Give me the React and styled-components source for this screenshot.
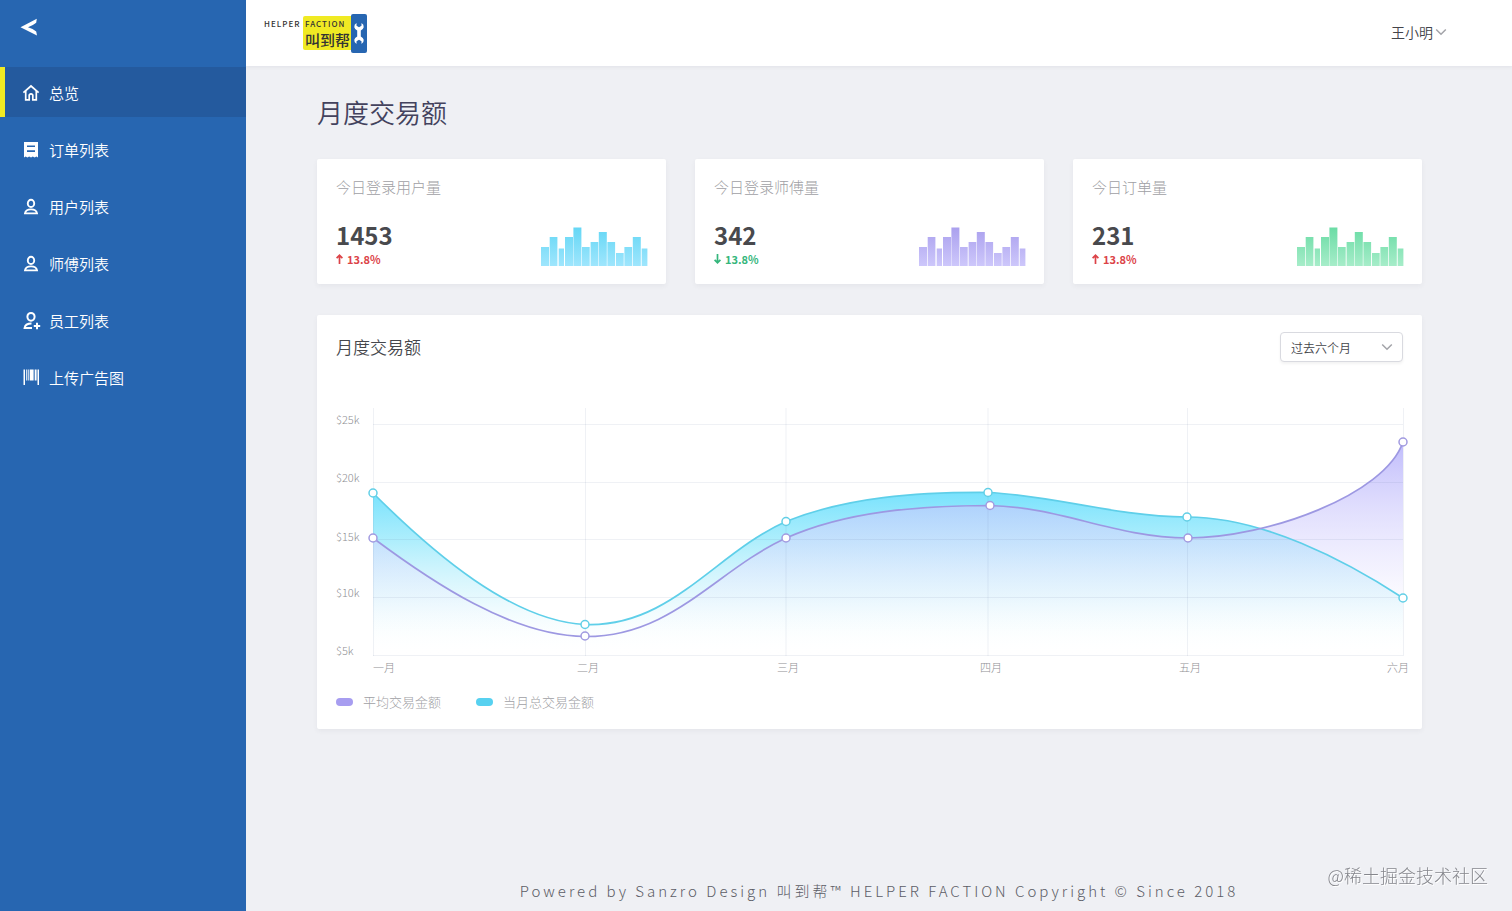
import React from 'react';
import styled, { createGlobalStyle } from 'styled-components';

const GlobalStyle = createGlobalStyle`
  *, *::before, *::after { box-sizing: border-box; }
  body {
    margin: 0;
    background: #eff0f4;
    color: #43425d;
    font-family: "Noto Sans CJK SC", "Noto Sans", sans-serif;
    font-weight: 300;
  }
  h1, h2, h3, p, ul, dl { margin: 0; padding: 0; }
  button, select { font: inherit; color: inherit; }
`;

const Page = styled.div`
  display: grid;
  grid-template-columns: 246px minmax(0, 1fr);
  min-height: 100vh;
`;

const Sidebar = styled.aside`
  background: #2766b1;
  color: #fff;
`;

const BackButton = styled.button`
  display: flex;
  align-items: center;
  width: 100%;
  height: 67px;
  padding: 0 20px 14px;
  border: 0;
  background: none;
  cursor: pointer;
`;

const NavList = styled.ul`
  display: grid;
  gap: 7px;
  list-style: none;
`;

const NavLink = styled.a`
  display: flex;
  align-items: center;
  gap: 8px;
  height: 50px;
  padding: 2px 0 0 18px;
  border-left: 5px solid ${(p) => (p.$active ? '#f0ea23' : 'transparent')};
  background: ${(p) => (p.$active ? '#245a9e' : 'transparent')};
  background-clip: padding-box;
  color: #fff;
  font-size: 15px;
  font-weight: 350;
  line-height: 22px;
  text-decoration: none;
  svg { flex: none; }
`;

const Main = styled.div`
  display: flex;
  flex-direction: column;
  min-width: 0;
`;

const TopBar = styled.header`
  display: flex;
  align-items: center;
  justify-content: space-between;
  height: 66px;
  padding: 0 65px 0 18px;
  background: #fff;
  box-shadow: 0 1px 4px rgba(60, 70, 90, 0.08);
`;

const Logo = styled.a`
  display: flex;
  align-items: center;
  color: #333;
  text-decoration: none;
  font-size: 8px;
  font-weight: 500;
  line-height: 10px;
  letter-spacing: 1px;
`;

const LogoLead = styled.span`
  height: 34px;
  padding-top: 3px;
  width: 39px;
`;

const LogoPlate = styled.span`
  display: flex;
  flex-direction: column;
  width: 48px;
  height: 34px;
  padding: 3px 2px 0;
  border-radius: 2px 0 0 2px;
  background: #f0ea23;
`;

const LogoName = styled.span`
  font-size: 15px;
  font-weight: 500;
  line-height: 22px;
  letter-spacing: 0;
  white-space: nowrap;
`;

const LogoTool = styled.span`
  display: grid;
  place-items: center;
  width: 16px;
  height: 39px;
  border-radius: 2px;
  background: #2766b1;
`;

const UserMenu = styled.button`
  display: flex;
  align-items: center;
  gap: 2px;
  padding: 0 0 2px;
  border: 0;
  background: none;
  color: #43444a;
  font-size: 14px;
  font-weight: 350;
  line-height: 20px;
  cursor: pointer;
`;

const Content = styled.main`
  flex: 1;
  padding: 26px 90px 0 71px;
`;

const Title = styled.h1`
  margin-bottom: 27px;
  font-size: 26px;
  font-weight: 350;
  line-height: 40px;
`;

const StatGrid = styled.section`
  display: grid;
  grid-template-columns: repeat(3, minmax(0, 1fr));
  gap: 29px;
  margin-bottom: 31px;
`;

const Card = styled.article`
  border-radius: 2px;
  background: #fff;
  box-shadow: 0 2px 5px rgba(60, 70, 90, 0.06);
`;

const StatCard = styled(Card)`
  padding: 17px 18px 17px 19px;
`;

const StatLabel = styled.h3`
  margin-bottom: 22px;
  color: #a0a0a4;
  font-size: 15px;
  font-weight: 300;
  line-height: 22px;
`;

const StatBody = styled.div`
  display: flex;
  align-items: flex-end;
  justify-content: space-between;
`;

const StatValue = styled.p`
  color: #48494d;
  font-size: 24px;
  font-weight: 700;
  line-height: 30px;
`;

const StatChange = styled.p`
  display: flex;
  align-items: center;
  gap: 4px;
  height: 17px;
  color: ${(p) => (p.$up ? '#dc4348' : '#35b67c')};
  font-size: 11px;
  font-weight: 700;
`;

const ChartCard = styled(Card)`
  padding-bottom: 17px;
`;

const ChartHeader = styled.div`
  display: flex;
  align-items: center;
  justify-content: space-between;
  padding: 17px 19px 28px;
`;

const ChartTitle = styled.h2`
  color: #46474c;
  font-size: 17px;
  font-weight: 350;
  line-height: 30px;
`;

const SelectBox = styled.label`
  display: grid;
  align-items: center;
  width: 123px;
  height: 30px;
  > * { grid-area: 1 / 1; }
  > svg { justify-self: end; margin-right: 10px; pointer-events: none; }
`;

const RangeSelect = styled.select`
  width: 100%;
  height: 100%;
  padding: 0 10px;
  border: 1px solid #d9dae0;
  border-radius: 4px;
  background: #fff;
  box-shadow: 0 2px 3px rgba(0, 0, 0, 0.05);
  color: #43444a;
  font-size: 12px;
  font-weight: 350;
  appearance: none;
`;

const Plot = styled.svg`
  display: block;
  width: 100%;
  height: auto;
  text {
    fill: #8f8f94;
    font-size: 11px;
    font-weight: 300;
  }
`;

const Legend = styled.ul`
  display: flex;
  gap: 35px;
  padding: 0 19px;
  margin-top: 16px;
  list-style: none;
`;

const LegendItem = styled.li`
  display: flex;
  align-items: center;
  gap: 10px;
  color: #a0a0a4;
  font-size: 13px;
  line-height: 20px;
  &::before {
    content: "";
    width: 17px;
    height: 8px;
    border-radius: 4px;
    background: ${(p) => p.$color};
  }
`;

const Footer = styled.footer`
  padding: 0 0 8px;
  color: #5c5d66;
  font-size: 15px;
  line-height: 24px;
  letter-spacing: 3px;
  text-align: center;
`;

const Watermark = styled.span`
  position: fixed;
  right: 24px;
  bottom: 24px;
  color: #85868c;
  font-size: 18px;
  line-height: 24px;
  text-shadow: 1px 1px 0 #fff;
`;

const icons = {
  home: (
    <g fill="none" stroke="#fff" strokeWidth="1.7">
      <path d="M.4 8.600 8 2 15.600 8.600" />
      <path d="M2.700 7.100V15.800H6.200V11.100Q8 8.800 9.800 11.100V15.800H13.300V7.100" />
    </g>
  ),
  order: (
    <path fill="#fff" fillRule="evenodd" d="M1 1H15V16.500L13.400 15.500 11.600 16.500 9.800 15.500 8 16.500 6.200 15.500 4.400 16.500 2.600 15.500 1 16.500ZM4 4.500V6.100H12V4.500ZM4 9.300V10.900H12V9.300Z" />
  ),
  user: (
    <g fill="none" stroke="#fff" strokeWidth="1.9">
      <ellipse cx="8" cy="5.400" rx="3.200" ry="3.600" />
      <path d="M2 15.400C2.400 12.600 4.500 11.400 8 11.400S13.600 12.600 14 15.400Z" />
    </g>
  ),
  staff: (
    <g fill="none" stroke="#fff" strokeWidth="2">
      <ellipse cx="8" cy="4.800" rx="3.600" ry="3.900" />
      <path d="M9 16H1.600C2 12.800 4 11.500 8.500 11.500" />
      <path d="M14 10.800V17.200M10.800 14H17.200" />
    </g>
  ),
  banner: (
    <g fill="#fff">
      <path d="M.5.5H2V16H.5ZM3.200.5H4.300V11.500H3.200ZM5.300.5H6.300V11.500H5.300ZM7 .5H10.600V11.500H7ZM11.700.5H13.600V11.500H11.700ZM14.500.5H16V16H14.500Z" />
    </g>
  ),
};

const NavIcon = ({ name }) => (
  <svg width="18" height="18" viewBox="0 0 18 18" overflow="visible" aria-hidden="true">
    {icons[name]}
  </svg>
);

const Chevron = () => (
  <svg width="12" height="8" viewBox="0 0 12 8" fill="none" stroke="#a3a4a9" strokeWidth="1.5" aria-hidden="true">
    <path d="M1.200 1.500 6 6.300 10.800 1.500" />
  </svg>
);

const Arrow = ({ up }) => (
  <svg width="7" height="10" viewBox="0 0 7 10" fill="none" stroke="currentColor" strokeWidth="1.700" aria-hidden="true">
    {up ? <path d="M3.500 10V1.500M.6 4.200 3.500 1.300 6.400 4.200" /> : <path d="M3.500 0V8.500M.6 5.800 3.500 8.700 6.400 5.800" />}
  </svg>
);

const navItems = [
  ['home', '总览'],
  ['order', '订单列表'],
  ['user', '用户列表'],
  ['user', '师傅列表'],
  ['staff', '员工列表'],
  ['banner', '上传广告图'],
];

const stats = [
  { id: 'users', label: '今日登录用户量', value: '1453', up: true, from: '#64d7f5', to: '#a0e6fd' },
  { id: 'masters', label: '今日登录师傅量', value: '342', up: false, from: '#aaa0ee', to: '#cec8fb' },
  { id: 'orders', label: '今日订单量', value: '231', up: true, from: '#6adca5', to: '#a8edca' },
];

// [x, width, height] of each bar
const bars = [
  [0, 8, 19], [8.7, 7.7, 29], [17.7, 5.3, 17.5], [24, 8, 29], [32.4, 8, 38.5],
  [41, 7.7, 19], [49.6, 7.7, 24], [57.8, 8, 34], [66.4, 7.7, 24],
  [75, 7.7, 13], [83.4, 7.7, 19], [91.8, 8, 29], [100.7, 5.700, 17.500],
];

const Bars = ({ id, from, to }) => (
  <svg width="107" height="40" viewBox="0 0 107 40" aria-hidden="true">
    <defs>
      <linearGradient id={id} x1="0" y1="0" x2="0" y2="40" gradientUnits="userSpaceOnUse">
        <stop offset="0" stopColor={from} />
        <stop offset="1" stopColor={to} />
      </linearGradient>
    </defs>
    {bars.map(([x, w, h]) => (
      <rect key={x} x={x} y={39 - h} width={w} height={h} fill={`url(#${id})`} />
    ))}
  </svg>
);

const totalLine =
  'M56 103C116 163 195 231 268 234.500C353 238 398 163 469 131.500C530 107 600 102 671 102.500C735 105 795 126 870 127C945 127 1028 170 1086 208';
const averageLine =
  'M56 148C115 192 195 246 268 246.500C355 247 398 181 469 148C530 121 600 116 672 115.500C745 117 795 147 871 148C950 148 1068 105 1086 52';

const totalPoints = [[56, 103], [268, 234.5], [469, 131.5], [671, 102.5], [870, 127], [1086, 208]];
const averagePoints = [[56, 148], [268, 246], [469, 148], [673, 115.5], [871, 148], [1086, 52]];

const yTicks = [['$25k', 34], ['$20k', 92], ['$15k', 150.5], ['$10k', 207], ['$5k', 264.5]];
const xTicks = [['一月', 67], ['二月', 271], ['三月', 471], ['四月', 674], ['五月', 873], ['六月', 1081]];

const Points = ({ points, color }) =>
  points.map(([x, y]) => (
    <circle key={x} cx={x} cy={y} r="4" fill="#fff" stroke={color} strokeWidth="1.500" />
  ));

const TrendChart = () => (
  <Plot viewBox="0 0 1105 286" role="img" aria-label="月度交易额">
    <defs>
      <linearGradient id="totalFill" x1="0" y1="102" x2="0" y2="265" gradientUnits="userSpaceOnUse">
        <stop offset="0" stopColor="#78e2fd" />
        <stop offset="0.3" stopColor="#a5ecfc" stopOpacity="0.900" />
        <stop offset="0.65" stopColor="#cdf3fc" stopOpacity="0.500" />
        <stop offset="1" stopColor="#fff" stopOpacity="0" />
      </linearGradient>
      <linearGradient id="averageFill" x1="0" y1="52" x2="0" y2="250" gradientUnits="userSpaceOnUse">
        <stop offset="0" stopColor="#b0abfb" stopOpacity="0.800" />
        <stop offset="0.32" stopColor="#cac6fc" stopOpacity="0.600" />
        <stop offset="0.65" stopColor="#e6e3fe" stopOpacity="0.450" />
        <stop offset="1" stopColor="#fff" stopOpacity="0" />
      </linearGradient>
    </defs>
    <path d={`${totalLine}V265H56Z`} fill="url(#totalFill)" />
    <path d={`${averageLine}V265H56Z`} fill="url(#averageFill)" />
    <path
      d="M56 34.500H1086M56 92.500H1086M56 149.500H1086M56 207.500H1086M56 265.500H1086M56.500 18V266M268.500 18V266M469 18V266M671 18V266M870.500 18V266M1086.500 18V266"
      fill="none"
      stroke="#50648c"
      strokeOpacity="0.09"
    />
    <path d={totalLine} fill="none" stroke="#5fcfe9" strokeWidth="1.700" />
    <path d={averageLine} fill="none" stroke="#9d98e2" strokeWidth="1.700" />
    <Points points={totalPoints} color="#62cfe6" />
    <Points points={averagePoints} color="#a19ae0" />
    {yTicks.map(([label, y]) => (
      <text key={label} x="19" y={y}>{label}</text>
    ))}
    {xTicks.map(([label, x]) => (
      <text key={label} x={x} y="282" textAnchor="middle">{label}</text>
    ))}
  </Plot>
);

export default function App() {
  return (
    <>
      <GlobalStyle />
      <Page>
        <Sidebar>
          <BackButton aria-label="收起菜单">
            <svg width="18" height="18" viewBox="0 0 18 18" fill="#fff" aria-hidden="true">
              <path d="M.5 9.300 16.800.8 16.200 4.800Q13 7.500 8 9.300 13 10.800 16.200 13.500L17 17.500Z" />
            </svg>
          </BackButton>
          <nav>
            <NavList>
              {navItems.map(([icon, label], i) => (
                <li key={label}>
                  <NavLink href="#" $active={i === 0} aria-current={i === 0 ? 'page' : undefined}>
                    <NavIcon name={icon} />
                    {label}
                  </NavLink>
                </li>
              ))}
            </NavList>
          </nav>
        </Sidebar>
        <Main>
          <TopBar>
            <Logo href="#">
              <LogoLead>HELPER</LogoLead>
              <LogoPlate>
                FACTION
                <LogoName>叫到帮</LogoName>
              </LogoPlate>
              <LogoTool>
                <svg width="10" height="21" viewBox="0 0 10 21" fill="#fff" aria-hidden="true">
                  <path d="M2.500 0V2.800L5 4.300 7.500 2.800V0Q10 1.500 9.700 4.300 9.300 6.300 6.800 7.500V13.500Q9.300 14.700 9.700 16.700 10 19.500 7.500 21V18.200L5 16.700 2.500 18.200V21Q0 19.500.3 16.700.7 14.700 3.200 13.500V7.500Q.7 6.300.3 4.300 0 1.500 2.500 0Z" />
                </svg>
              </LogoTool>
            </Logo>
            <UserMenu>
              王小明
              <Chevron />
            </UserMenu>
          </TopBar>
          <Content>
            <Title>月度交易额</Title>
            <StatGrid>
              {stats.map((s) => (
                <StatCard key={s.id}>
                  <StatLabel>{s.label}</StatLabel>
                  <StatBody>
                    <div>
                      <StatValue>{s.value}</StatValue>
                      <StatChange $up={s.up}>
                        <Arrow up={s.up} />
                        13.8%
                      </StatChange>
                    </div>
                    <Bars id={s.id} from={s.from} to={s.to} />
                  </StatBody>
                </StatCard>
              ))}
            </StatGrid>
            <ChartCard>
              <ChartHeader>
                <ChartTitle>月度交易额</ChartTitle>
                <SelectBox>
                  <RangeSelect aria-label="时间范围">
                    <option>过去六个月</option>
                  </RangeSelect>
                  <Chevron />
                </SelectBox>
              </ChartHeader>
              <TrendChart />
              <Legend>
                <LegendItem $color="#a79df0">平均交易金额</LegendItem>
                <LegendItem $color="#57d1f0">当月总交易金额</LegendItem>
              </Legend>
            </ChartCard>
          </Content>
          <Footer>Powered by Sanzro Design 叫到帮™ HELPER FACTION Copyright © Since 2018</Footer>
        </Main>
      </Page>
      <Watermark>@稀土掘金技术社区</Watermark>
    </>
  );
}
